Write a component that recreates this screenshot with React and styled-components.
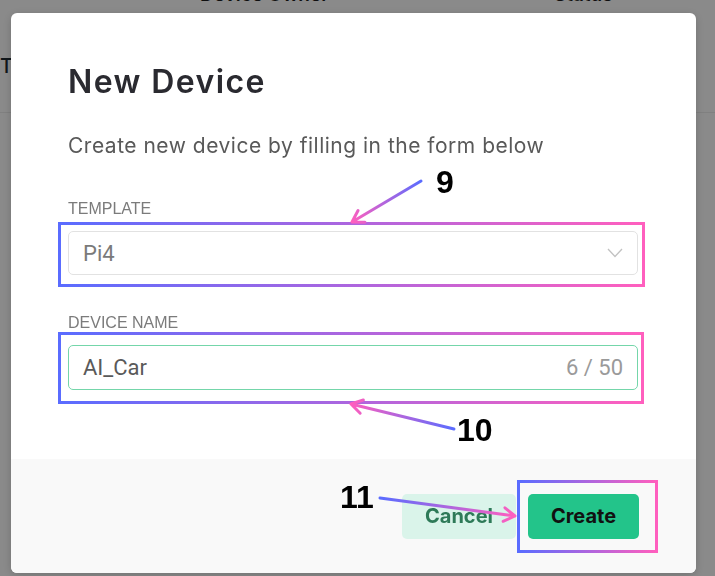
import React from 'react';
import styled, { createGlobalStyle } from 'styled-components';

const GlobalStyle = createGlobalStyle`
  html, body { margin: 0; padding: 0; }
  body {
    font-family: Inter, "Liberation Sans", Arial, sans-serif;
    background: #fff;
    width: 715px;
    height: 576px;
    overflow: hidden;
  }
  * { box-sizing: border-box; }
`;

/* ---------- background page (behind the dialog) ---------- */
const Page = styled.div`
  width: 715px;
  height: 576px;
  background: #fff;
  overflow: hidden;
  display: flex;
  flex-direction: column;
`;

const TableHead = styled.div`
  display: flex;
  align-items: flex-end;
  height: 26px;
  margin-top: -20px;
  padding-left: 163px;
  font-size: 19px;
  font-weight: 600;
  color: #1d1d1d;
`;

const HeadCell = styled.div`
  display: flex;
  align-items: center;
  gap: 27px;
  width: ${(p) => p.$w}px;
`;

const Caret = styled.span`
  width: 0;
  height: 0;
  border-left: 5px solid transparent;
  border-right: 5px solid transparent;
  border-top: 6px solid #6e6e6e;
`;

const Toolbar = styled.div`
  height: 107px;
  display: flex;
  align-items: flex-start;
  border-bottom: 1px solid #ececec;
  padding-top: 48px;
  font-size: 20px;
  line-height: 24px;
  font-weight: 500;
  color: #1f2b33;
`;

const Backdrop = styled.div`
  position: fixed;
  inset: 0;
  background: rgba(0, 0, 0, 0.46);
`;

/* ---------- dialog ---------- */
const Dialog = styled.div`
  position: fixed;
  left: 11px;
  top: 13px;
  width: 685px;
  height: 560px;
  background: #fff;
  border-radius: 6px;
  overflow: hidden;
  display: flex;
  flex-direction: column;
  box-shadow: 0 2px 10px rgba(0, 0, 0, 0.18);
`;

const Body = styled.div`
  flex: 1;
  display: flex;
  flex-direction: column;
  padding: 50px 58px 0 57px;
`;

const Title = styled.h2`
  margin: 0;
  font-size: 32px;
  line-height: 38px;
  font-weight: 600;
  letter-spacing: 1.4px;
  color: #2a2a30;
`;

const Subtitle = styled.p`
  margin: 32px 0 0;
  font-size: 21px;
  line-height: 25px;
  letter-spacing: 0.5px;
  color: #595959;
`;

const Field = styled.div`
  display: flex;
  flex-direction: column;
  margin-top: ${(p) => p.$top}px;
`;

const Label = styled.label`
  font-family: "Liberation Sans", Arial, sans-serif;
  font-size: 16px;
  line-height: 18px;
  text-transform: uppercase;
  color: #7b7b7b;
  margin-bottom: 13px;
`;

const Annotated = styled.div`
  position: relative;
  &::after {
    content: '';
    position: absolute;
    top: ${(p) => -p.$t}px;
    right: ${(p) => -p.$r}px;
    bottom: ${(p) => -p.$b}px;
    left: ${(p) => -p.$l}px;
    border: 3px solid;
    border-image: linear-gradient(90deg, #5a6cff, #ff5fbe) 1;
    pointer-events: none;
  }
`;

const Control = styled.div`
  height: ${(p) => p.$h}px;
  display: flex;
  align-items: center;
  justify-content: space-between;
  padding: 0 14px;
  border: 1px solid ${(p) => (p.$focus ? '#74d6aa' : '#e2e2e2')};
  border-radius: 5px;
  font-family: Roboto, "Liberation Sans", Arial, sans-serif;
  font-size: 22px;
  color: ${(p) => (p.$muted ? '#7a7a7a' : '#5a5a5a')};
  background: #fff;
`;

const Counter = styled.span`
  color: #9a9a9a;
`;

const Footer = styled.div`
  height: 114px;
  flex: none;
  background: #f9f9f9;
  display: flex;
  justify-content: flex-end;
  align-items: center;
  gap: 12px;
  padding-right: 57px;
`;

const Button = styled.button`
  height: 45px;
  width: ${(p) => p.$w}px;
  border: none;
  border-radius: 5px;
  font-family: Inter, "Liberation Sans", Arial, sans-serif;
  font-size: 20px;
  font-weight: 700;
  background: ${(p) => (p.$primary ? '#23c48a' : '#daf4ea')};
  color: ${(p) => (p.$primary ? '#111' : '#2e7a58')};
  cursor: pointer;
`;

/* ---------- annotation layer ---------- */
const Notes = styled.div`
  position: fixed;
  inset: 0;
  pointer-events: none;
`;

const Num = styled.span`
  position: absolute;
  left: ${(p) => p.$x}px;
  top: ${(p) => p.$y}px;
  font-family: "Liberation Sans", Arial, sans-serif;
  font-weight: 700;
  font-size: 32px;
  line-height: 32px;
  color: #000;
`;

const ArrowSvg = styled.svg`
  position: absolute;
  left: 0;
  top: 0;
`;

function Arrow({ id, x1, y1, x2, y2 }) {
  const a = Math.atan2(y1 - y2, x1 - x2);
  const len = 13;
  const spread = 0.55;
  const p1 = [x2 + len * Math.cos(a + spread), y2 + len * Math.sin(a + spread)];
  const p2 = [x2 + len * Math.cos(a - spread), y2 + len * Math.sin(a - spread)];
  return (
    <g>
      <defs>
        <linearGradient id={id} gradientUnits="userSpaceOnUse" x1={x1} y1={y1} x2={x2} y2={y2}>
          <stop offset="0" stopColor="#5a6cff" />
          <stop offset="1" stopColor="#ff5fbe" />
        </linearGradient>
      </defs>
      <path
        d={`M${x1} ${y1} L${x2} ${y2} M${p1[0]} ${p1[1]} L${x2} ${y2} L${p2[0]} ${p2[1]}`}
        stroke={`url(#${id})`}
        strokeWidth="3"
        strokeLinecap="round"
        strokeLinejoin="round"
        fill="none"
      />
    </g>
  );
}

function Chevron() {
  return (
    <svg width="16" height="10" viewBox="0 0 16 10">
      <polyline points="1,1 8,8.5 15,1" fill="none" stroke="#c2c2c2" strokeWidth="1.3" />
    </svg>
  );
}

export default function App() {
  return (
    <>
      <GlobalStyle />
      <Page>
        <TableHead>
          <HeadCell $w={357}>
            <Caret />
            Device Owner
          </HeadCell>
          <HeadCell $w={200}>
            <Caret />
            Status
          </HeadCell>
        </TableHead>
        <Toolbar>Total</Toolbar>
      </Page>
      <Backdrop />
      <Dialog>
        <Body>
          <Title>New Device</Title>
          <Subtitle>Create new device by filling in the form below</Subtitle>
          <Field $top={42}>
            <Label>Template</Label>
            <Annotated $t={9} $r={7} $b={12} $l={10}>
              <Control $h={44} $muted>
                <span>Pi4</span>
                <Chevron />
              </Control>
            </Annotated>
          </Field>
          <Field $top={39}>
            <Label>Device Name</Label>
            <Annotated $t={13} $r={6} $b={14} $l={10}>
              <Control $h={45} $focus>
                <span>AI_Car</span>
                <Counter>6 / 50</Counter>
              </Control>
            </Annotated>
          </Field>
        </Body>
        <Footer>
          <Button $w={114}>Cancel</Button>
          <Annotated $t={14} $r={19} $b={14} $l={11}>
            <Button $w={111} $primary>
              Create
            </Button>
          </Annotated>
        </Footer>
      </Dialog>
      <Notes>
        <ArrowSvg width="715" height="576">
          <Arrow id="g9" x1={421} y1={181} x2={352} y2={222} />
          <Arrow id="g10" x1={454} y1={429} x2={351} y2={404} />
          <Arrow id="g11" x1={380} y1={498} x2={515} y2={516} />
        </ArrowSvg>
        <Num $x={436} $y={166}>9</Num>
        <Num $x={457} $y={414}>10</Num>
        <Num $x={340} $y={481}>11</Num>
      </Notes>
    </>
  );
}
